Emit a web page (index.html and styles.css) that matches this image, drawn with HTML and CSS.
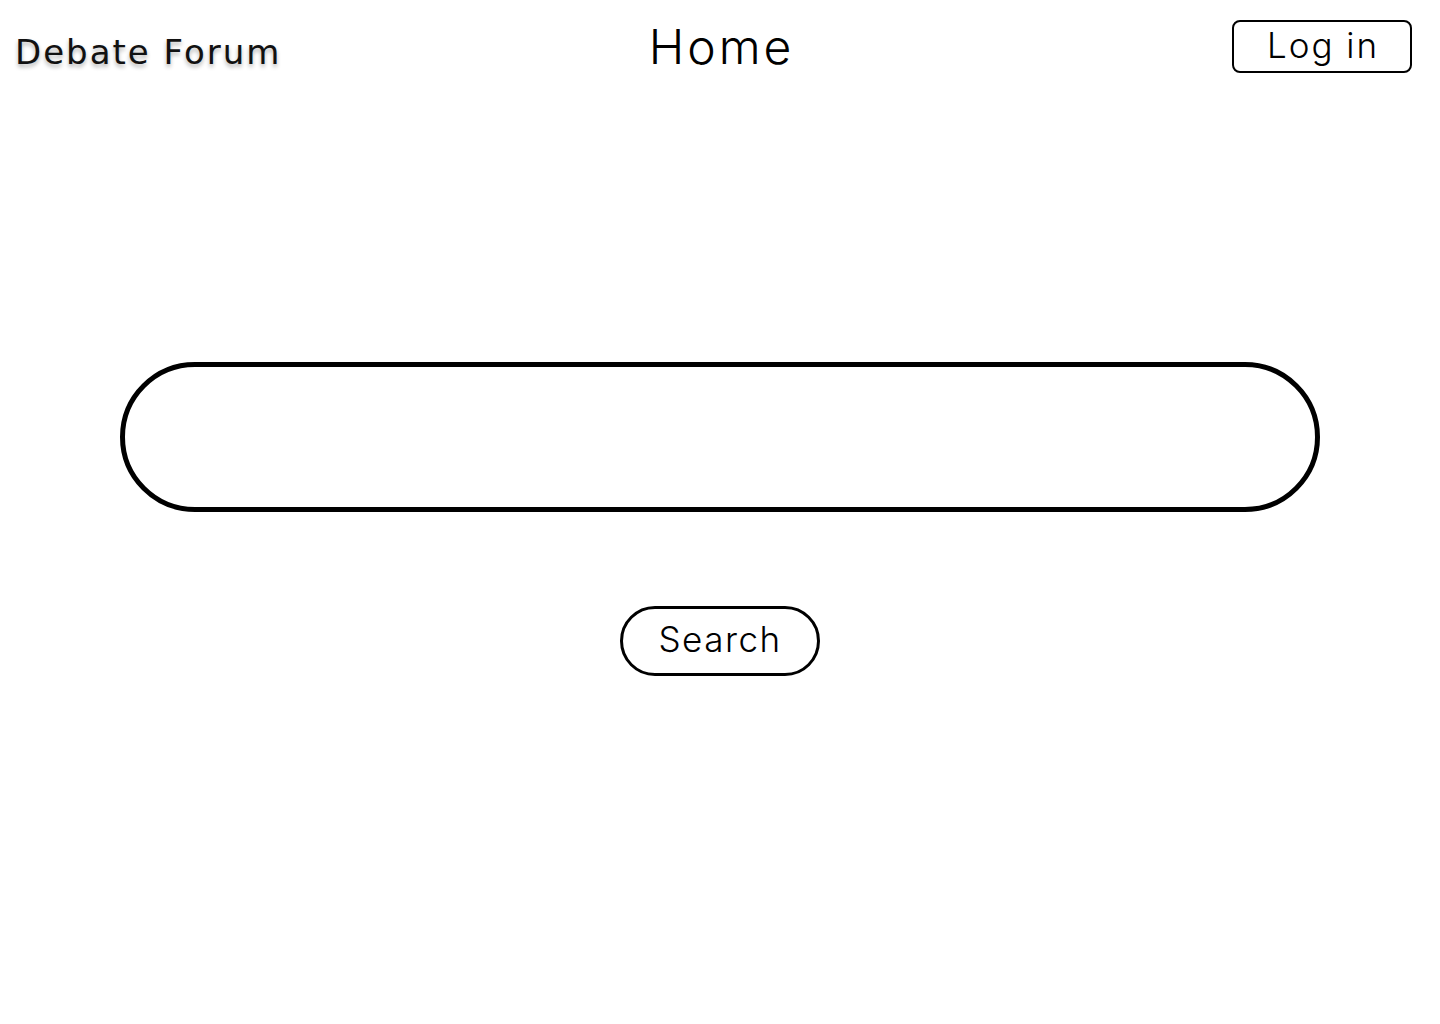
FILE: index.html
```html
<!DOCTYPE html>
<html lang="en">
<head>
<meta charset="utf-8">
<title>Debate Forum - Home</title>
<link rel="stylesheet" href="styles.css">
</head>
<body>
<header class="topbar">
  <div class="brand">Debate Forum</div>
  <h1 class="page-title">Home</h1>
  <div class="actions"><button class="login-btn">Log in</button></div>
</header>
<main class="search-area">
  <input class="search-input" type="text" aria-label="Search">
  <button class="search-btn">Search</button>
</main>
</body>
</html>
```
FILE: styles.css
```css
* { box-sizing: border-box; }
html, body { margin: 0; padding: 0; background: #fff; }
body {
  width: 1440px;
  height: 1024px;
  font-family: Inter, "Open Sans", sans-serif;
  color: #000;
}
.topbar {
  display: grid;
  grid-template-columns: 1fr auto 1fr;
  align-items: start;
  padding: 20px 28px 0 28px;
}
.brand {
  font-family: "DejaVu Sans", sans-serif;
  font-size: 34px;
  line-height: 40px;
  letter-spacing: 2px;
  margin-top: 12px;
  margin-left: -13px;
  text-shadow: 0 3px 4px rgba(0,0,0,0.3);
  color: #111;
}
.page-title {
  margin: 0;
  font-weight: 300;
  font-size: 48px;
  line-height: 56px;
  letter-spacing: 3px;
  margin-top: -1px;
  padding-left: 3px;
}
.actions { display: flex; justify-content: flex-end; }
.login-btn {
  width: 180px;
  height: 53px;
  border: 2px solid #000;
  border-radius: 8px;
  background: #fff;
  font-family: Inter, sans-serif;
  font-weight: 300;
  font-size: 35px;
  letter-spacing: 2px;
  line-height: 1;
  padding: 0 0 2px 2px;
  color: #000;
}
.search-area {
  display: flex;
  flex-direction: column;
  align-items: center;
  padding-top: 287px;
}
.search-input {
  width: 1200px;
  height: 150px;
  border: 5px solid #000;
  border-radius: 75px;
  background: #fff;
  outline: none;
}
.search-btn {
  margin-top: 94px;
  width: 200px;
  height: 70px;
  border: 3px solid #000;
  border-radius: 35px;
  background: #fff;
  font-family: Inter, sans-serif;
  font-weight: 300;
  font-size: 35px;
  letter-spacing: 1.5px;
  line-height: 1;
  padding: 0 0 4px 0;
  color: #000;
}
```
